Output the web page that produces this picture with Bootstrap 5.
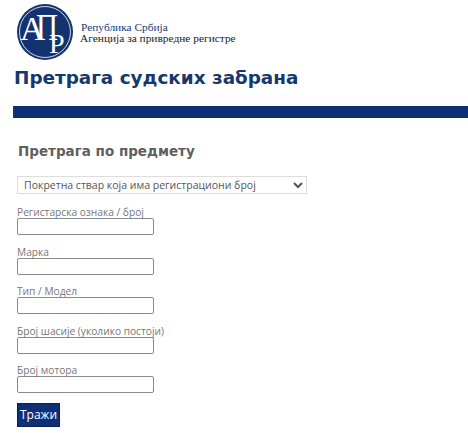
<!DOCTYPE html>
<html lang="sr">
<head>
  <meta charset="UTF-8" />
  <meta name="viewport" content="width=device-width, initial-scale=1" />
  <title>Претрага судских забрана</title>
  <link href="https://cdn.jsdelivr.net/npm/bootstrap@5.3.0/dist/css/bootstrap.min.css" rel="stylesheet" />
  <style>
    body {
      background: #fff;
      font-family: "DejaVu Sans", Verdana, sans-serif;
      overflow: hidden;
    }
    .apr-head { padding: 4px 0 0 17px; height: 60px; }
    .apr-head-text {
      font-family: "Liberation Serif", serif;
      font-size: 11.4px;
      line-height: 11px;
      color: #222;
      margin-left: 7px;
      margin-top: 2px;
    }
    .apr-head-text .apr-rep { color: #1a3a78; padding-left: 1px; }
    .apr-title {
      font-size: 18.4px;
      font-weight: 700;
      color: #14386f;
      margin: 6px 0 0 14px;
      line-height: 24px;
    }
    .apr-bar { height: 12px; background: #0f2f76; margin: 16px 0 0 13px; }
    .apr-sub {
      font-size: 13.5px;
      font-weight: 700;
      color: #5f5f5f;
      margin: 24px 0 0 18px;
      line-height: 18px;
    }
    .apr-form { padding: 16px 0 0 17px; }
    .apr-select {
      display: block;
      width: 290px;
      height: 18px;
      padding: 0 0 0 2px;
      font-size: 10.5px;
      color: #555;
      background: #fff;
      border: 1px solid #ddd;
      border-radius: 0;
      font-family: "Open Sans", sans-serif;
      margin-bottom: 11px;
    }
    .apr-field { margin-bottom: 7px; height: 32.5px; }
    .apr-field label {
      display: block;
      font-family: "Open Sans", sans-serif;
      font-size: 10.2px;
      line-height: 15px;
      color: #777;
      height: 13px;
      margin-bottom: 0;
    }
    .apr-field input {
      display: block;
      width: 137px;
      height: 17px;
      padding: 0 2px;
      border: 1px solid #8a8a8a;
      border-radius: 2px;
      background: #fff;
    }
    .apr-btn {
      --bs-btn-padding-x: 0;
      --bs-btn-padding-y: 0;
      --bs-btn-font-size: 12px;
      --bs-btn-border-radius: 0;
      --bs-btn-bg: #0f2f76;
      --bs-btn-border-color: #0a2050;
      --bs-btn-color: #fff;
      display: block;
      width: 43px;
      height: 24px;
      font-family: "Open Sans", sans-serif;
    }
  </style>
</head>
<body>
  <!-- Zaglavlje sa logom -->
  <div class="apr-head d-flex align-items-center">
    <svg width="56" height="56" viewBox="0 0 56 56" role="img" aria-label="АПР">
      <circle cx="28" cy="28" r="28" fill="#12336f" />
      <circle cx="28" cy="28" r="25.5" fill="none" stroke="#fff" stroke-width="0.8" />
      <text font-family="Liberation Serif" fill="#fff"><tspan x="3" y="36" font-size="34">А</tspan><tspan x="19" y="36" font-size="38" textLength="22" lengthAdjust="spacingAndGlyphs">П</tspan><tspan x="32" y="49" font-size="28">Р</tspan></text>
    </svg>
    <div class="apr-head-text">
      <div class="apr-rep">Република Србија</div>
      <div>Агенција за привредне регистре</div>
    </div>
  </div>

  <h1 class="apr-title">Претрага судских забрана</h1>
  <div class="apr-bar"></div>

  <h2 class="apr-sub">Претрага по предмету</h2>

  <form class="apr-form">
    <select class="apr-select">
      <option>Покретна ствар која има регистрациони број</option>
    </select>
    <div class="apr-field">
      <label for="f1">Регистарска ознака / број</label>
      <input id="f1" type="text" />
    </div>
    <div class="apr-field">
      <label for="f2">Марка</label>
      <input id="f2" type="text" />
    </div>
    <div class="apr-field">
      <label for="f3">Тип / Модел</label>
      <input id="f3" type="text" />
    </div>
    <div class="apr-field">
      <label for="f4">Број шасије (уколико постоји)</label>
      <input id="f4" type="text" />
    </div>
    <div class="apr-field">
      <label for="f5">Број мотора</label>
      <input id="f5" type="text" />
    </div>
    <button type="button" class="btn apr-btn">Тражи</button>
  </form>

  <script src="https://cdn.jsdelivr.net/npm/bootstrap@5.3.0/dist/js/bootstrap.bundle.min.js"></script>
</body>
</html>
